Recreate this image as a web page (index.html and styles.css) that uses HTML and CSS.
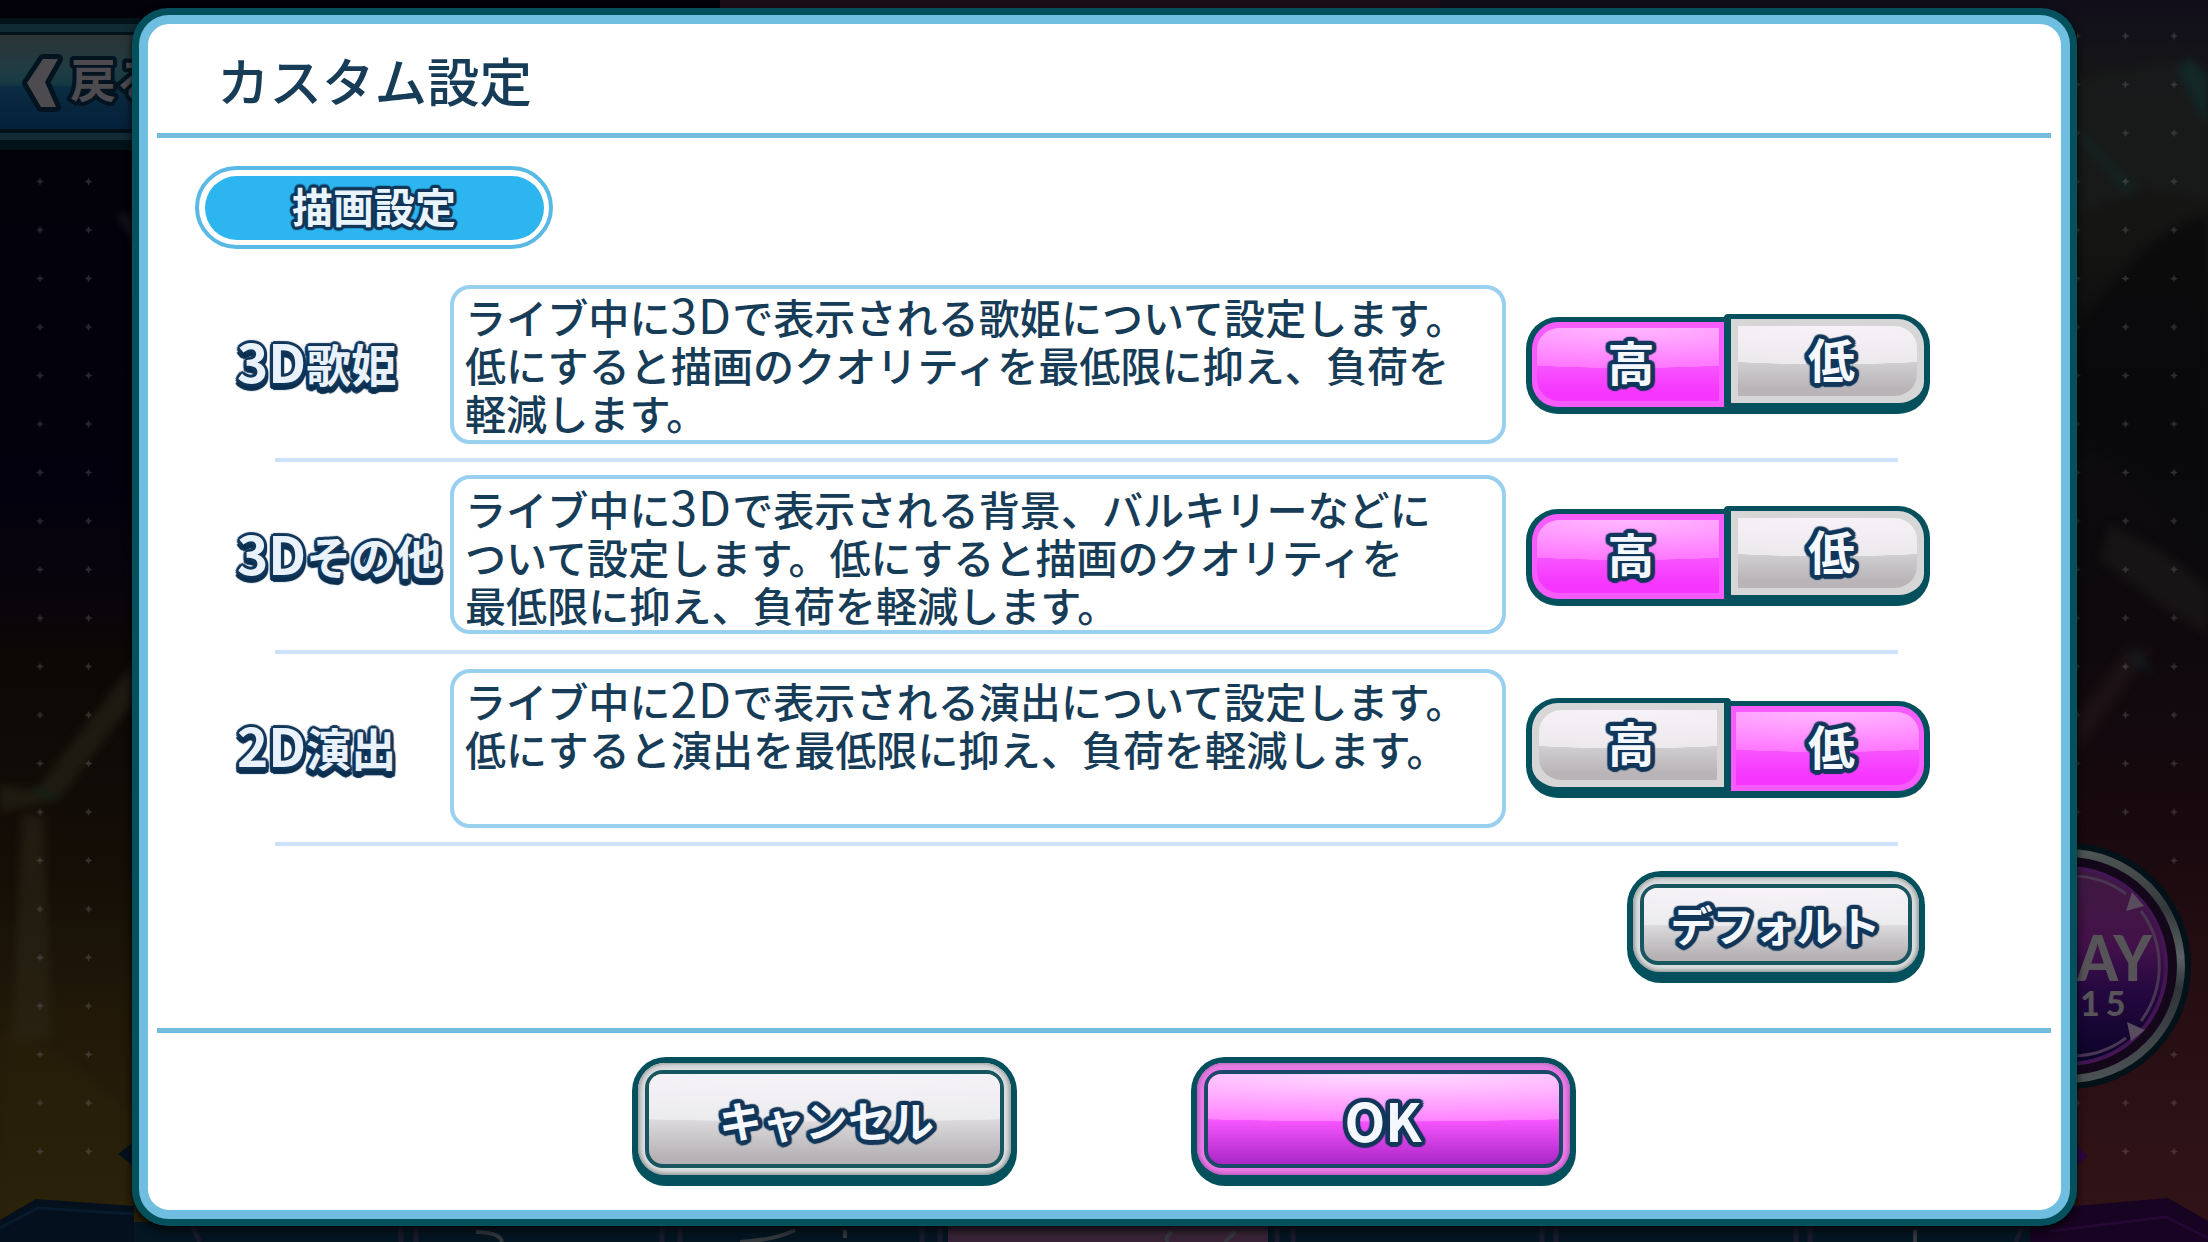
FILE: index.html
```html
<!DOCTYPE html>
<html lang="ja">
<head>
<meta charset="utf-8">
<title>カスタム設定</title>
<link rel="stylesheet" href="styles.css">
</head>
<body>
<svg class="scene" viewBox="0 0 2208 1242" aria-hidden="true">
  <defs>
    <linearGradient id="skyLeft" x1="0" y1="0" x2="0" y2="1">
      <stop offset="0" stop-color="#03020a"/><stop offset=".4" stop-color="#03010d"/>
      <stop offset=".48" stop-color="#09050c"/><stop offset=".53" stop-color="#0b0805"/>
      <stop offset=".7" stop-color="#140e06"/><stop offset=".82" stop-color="#211808"/>
      <stop offset="1" stop-color="#2b220a"/>
    </linearGradient>
    <linearGradient id="skyRight" x1="0" y1="0" x2="0" y2="1">
      <stop offset="0" stop-color="#100d1a"/><stop offset=".06" stop-color="#161617"/>
      <stop offset=".18" stop-color="#151513"/><stop offset=".3" stop-color="#0c0c0e"/>
      <stop offset=".5" stop-color="#0d090d"/><stop offset=".66" stop-color="#18090e"/>
      <stop offset=".8" stop-color="#260e12"/><stop offset="1" stop-color="#321418"/>
    </linearGradient>
    <linearGradient id="backBar" x1="0" y1="0" x2="0" y2="1">
      <stop offset="0" stop-color="#2c3436"/><stop offset=".35" stop-color="#213c43"/>
      <stop offset=".52" stop-color="#153a44"/><stop offset=".56" stop-color="#0a2c41"/>
      <stop offset="1" stop-color="#04203a"/>
    </linearGradient>
    <linearGradient id="disc" x1="0" y1="0" x2="0" y2="1">
      <stop offset="0" stop-color="#3e1a3e"/><stop offset=".4" stop-color="#43114a"/>
      <stop offset=".62" stop-color="#260840"/><stop offset="1" stop-color="#080428"/>
    </linearGradient>
    <linearGradient id="rim" x1="0" y1="0" x2="0" y2="1">
      <stop offset="0" stop-color="#4e5354"/><stop offset=".25" stop-color="#343a3b"/>
      <stop offset=".46" stop-color="#5a6264"/><stop offset=".6" stop-color="#2e3438"/>
      <stop offset="1" stop-color="#4c5254"/>
    </linearGradient>
    <pattern id="stars" x="15.75" y="11.75" width="48.5" height="48.5" patternUnits="userSpaceOnUse">
      <path d="M24.25 20.5l1.2 2.6 2.6 1.2-2.6 1.2-1.2 2.6-1.2-2.6-2.6-1.2 2.6-1.2z" fill="#8b8794" fill-opacity=".28"/>
    </pattern>
    <filter id="soft" color-interpolation-filters="sRGB"><feGaussianBlur stdDeviation="4"/></filter>
  </defs>
  <rect width="1104" height="1242" fill="url(#skyLeft)"/>
  <rect x="1104" width="1104" height="1242" fill="url(#skyRight)"/>
  <rect x="720" width="720" height="12" fill="#1c0e19"/>
  <g filter="url(#soft)" opacity=".75">
    <path d="M0 785L36 790 134 662V702L58 800 0 812z" fill="#292519" fill-opacity=".8"/>
    <path d="M22 815H44L52 1040H12z" fill="#2e2819" fill-opacity=".7"/>
    <path d="M30 785l34 12-20 3z" fill="#16281c"/>
    <path d="M118 215l8-2 10 20v10z" fill="#29222e"/>
    <path d="M0 1030Q60 1040 134 1120V1242H0z" fill="#2b230a" fill-opacity=".5"/>
    <path d="M2077 80L2180 60 2208 88V200L2140 188 2077 215z" fill="#191b1b"/>
    <path d="M2178 70l12-12 18 20v50z" fill="#12302e"/>
    <path d="M2077 126l62 62-12 9-50-58z" fill="#142624"/>
    <path d="M2077 330Q2150 225 2208 215V560Q2150 470 2077 445z" fill="#09090b"/>
    <path d="M2110 525Q2170 550 2208 590V635L2160 605 2100 560z" fill="#1b1818"/>
    <path d="M2077 715l50-65 25-2-24 36-51 70z" fill="#201518"/>
    <path d="M2128 646l27 27-19-8z" fill="#12282a"/>
  </g>
  <rect y="160" width="134" height="1020" fill="url(#stars)"/>
  <rect x="2077" y="16" width="131" height="1170" fill="url(#stars)"/>

  <rect y="18" width="140" height="132" fill="#02131a"/>
  <rect y="24" width="140" height="8" fill="#112b35"/>
  <rect y="35" width="140" height="94" fill="url(#backBar)"/>
  <rect y="129" width="140" height="4" fill="#021018"/>
  <rect y="133" width="140" height="7" fill="#112b37"/>
  <path d="M43 59H58L45 82 56 107H41L27 83z" fill="#4d4b4f" stroke="#03131f" stroke-width="10" stroke-linejoin="round" paint-order="stroke"/>
  <text class="back-text" x="70" y="97">戻る</text>

  <circle cx="2068" cy="966" r="123" fill="#031118"/>
  <circle cx="2068" cy="966" r="113" fill="#15071a" stroke="url(#rim)" stroke-width="8"/>
  <circle cx="2068" cy="966" r="98" fill="url(#disc)" stroke="#421653" stroke-width="4"/>
  <path d="M2074 876a90 90 0 0 1 52 18M2141 911a92 92 0 0 1 0 110M2126 1038a90 90 0 0 1-52 18" fill="none" stroke="#4b3554" stroke-width="3"/>
  <path d="M2132 892l12 14-18 5zM2127 1022l18 8-14 11z" fill="#594c5e"/>
  <text class="play-text" x="2077" y="981" textLength="75" lengthAdjust="spacingAndGlyphs">AY</text>
  <text class="play-count" x="2080" y="1016">15</text>

  <path d="M118 1154l18-14v28zM0 1220L36 1199 134 1206V1242H0z" fill="#04101d"/>
  <path d="M0 1228L38 1208 134 1214" fill="none" stroke="#081a2d" stroke-width="3"/>
  <path d="M2074 1144l14 12-14 11z" fill="#2c0640"/>
  <path d="M2030 1210L2168 1198 2208 1221V1242H2030z" fill="#170322"/>
  <path d="M2050 1231L2166 1217 2208 1238" fill="none" stroke="#240833" stroke-width="3"/>
  <rect x="134" y="1222" width="1896" height="20" fill="#041622"/>
  <rect x="948" y="1222" width="320" height="20" fill="#382336"/>
  <path d="M190 1222l10 20M401 1222v20M416 1222v20M662 1222v20M680 1222v20M922 1222v20M940 1222v20M1277 1222v20M1293 1222v20M1542 1222v20M1556 1222v20M1796 1222v20M1810 1222v20M2024 1222l-8 20" stroke="#191a2b" stroke-width="5"/>
  <path d="M476 1232q24 0 26 10M740 1242q35-2 55-12M845 1230v8M1172 1232q-8 5-4 10M1235 1232l-10 10M1915 1230v12" fill="none" stroke="#33383d" stroke-width="4"/>
</svg>

<main class="dialog">
  <div class="panel">
    <header class="header"><h1 class="title">カスタム設定</h1></header>
    <div class="rule"></div>

    <section class="body">
      <h2 class="pill"><span class="pill-fill"><span class="outlined">描画設定</span></span></h2>

      <div class="row">
        <div class="label"><span class="latin">3D</span>歌姫</div>
        <p class="desc">ライブ中に<span class="latin">3D</span>で表示される歌姫について設定します。<br>低にすると描画のクオリティを最低限に抑え、負荷を<br>軽減します。</p>
        <div class="toggle">
          <button class="seg seg-left on"><span class="outlined">高</span></button>
          <button class="seg seg-right"><span class="outlined">低</span></button>
        </div>
      </div>
      <div class="row-rule"></div>

      <div class="row">
        <div class="label"><span class="latin">3D</span>その他</div>
        <p class="desc desc-raised">ライブ中に<span class="latin">3D</span>で表示される背景、バルキリーなどに<br>ついて設定します。低にすると描画のクオリティを<br>最低限に抑え、負荷を軽減します。</p>
        <div class="toggle">
          <button class="seg seg-left on"><span class="outlined">高</span></button>
          <button class="seg seg-right"><span class="outlined">低</span></button>
        </div>
      </div>
      <div class="row-rule"></div>

      <div class="row">
        <div class="label"><span class="latin">2D</span>演出</div>
        <p class="desc">ライブ中に<span class="latin">2D</span>で表示される演出について設定します。<br>低にすると演出を最低限に抑え、負荷を軽減します。</p>
        <div class="toggle">
          <button class="seg seg-left"><span class="outlined">高</span></button>
          <button class="seg seg-right on"><span class="outlined">低</span></button>
        </div>
      </div>
      <div class="row-rule"></div>

      <button class="btn btn-default"><span class="frame"><span class="face"><span class="outlined">デフォルト</span></span></span></button>
    </section>

    <div class="rule"></div>
    <footer class="footer">
      <button class="btn btn-large"><span class="frame"><span class="face"><span class="outlined">キャンセル</span></span></span></button>
      <button class="btn btn-large btn-ok"><span class="frame"><span class="face"><span class="outlined">OK</span></span></span></button>
    </footer>
  </div>
</main>
</body>
</html>
```
FILE: styles.css
```css
* { box-sizing: border-box; }

body {
  margin: 0;
  width: 2208px;
  height: 1242px;
  overflow: hidden;
  padding: 7.5px 131px 0 132px;
  background: #05030c;
  color: #173c57;
  font-family: "Noto Sans CJK JP", "Noto Sans", sans-serif;
}

button { border: 0; padding: 0; margin: 0; font: inherit; background: none; color: inherit; }

/* Dimmed game scene behind the dialog */
.scene { position: absolute; left: 0; top: 0; width: 2208px; height: 1242px; }
.back-text {
  font-size: 46px; font-weight: 700; fill: #4d4b4f;
  stroke: #03131f; stroke-width: 8px; stroke-linejoin: round; paint-order: stroke;
}
.play-text { font: 900 62px Lato, sans-serif; fill: #565359; }
.play-count { font: 900 34px Lato, sans-serif; letter-spacing: 6px; fill: #565359; }

/* Dialog shell */
.dialog {
  position: relative;
  width: 1945px;
  height: 1218px;
  padding: 7px;
  border-radius: 36px;
  background: #04505c;
  box-shadow: 0 4px 8px rgba(0, 0, 0, .8);
}
.panel {
  display: flex;
  flex-direction: column;
  height: 100%;
  border: 9.5px solid #6fbddf;
  border-radius: 30px;
  background: #fff;
}
.header { height: 109px; padding: 0 0 0 69px; display: flex; align-items: center; }
.title { margin: 2px 0 0; font-size: 52.5px; line-height: 76px; font-weight: 500; white-space: nowrap; }
.rule { height: 5.5px; flex: none; margin: 0 10px 0 9px; background: #73bcdb; }
.body { height: 889.5px; padding-top: 28px; display: flex; flex-direction: column; }

/* Light lettering with a rounded navy outline; --o is the outline radius */
.outlined {
  --o: 4.5px;
  --d: calc(var(--o) * .707);
  --a: calc(var(--o) * .924);
  --b: calc(var(--o) * .383);
  position: relative;
  color: #f5f9ff;
  font-weight: 700;
  white-space: nowrap;
  text-shadow:
    var(--o) 0 1px #12375a, calc(var(--o) * -1) 0 1px #12375a,
    0 var(--o) 1px #12375a, 0 calc(var(--o) * -1) 1px #12375a,
    var(--d) var(--d) 1px #12375a, calc(var(--d) * -1) var(--d) 1px #12375a,
    var(--d) calc(var(--d) * -1) 1px #12375a, calc(var(--d) * -1) calc(var(--d) * -1) 1px #12375a,
    var(--a) var(--b) 1px #12375a, calc(var(--a) * -1) var(--b) 1px #12375a,
    var(--a) calc(var(--b) * -1) 1px #12375a, calc(var(--a) * -1) calc(var(--b) * -1) 1px #12375a,
    var(--b) var(--a) 1px #12375a, calc(var(--b) * -1) var(--a) 1px #12375a,
    var(--b) calc(var(--a) * -1) 1px #12375a, calc(var(--b) * -1) calc(var(--a) * -1) 1px #12375a,
    2px 2px 0 #12375a, -2px 2px 0 #12375a, 2px -2px 0 #12375a, -2px -2px 0 #12375a;
}

.pill {
  margin: 0 0 0 47px;
  width: 358px;
  height: 83px;
  flex: none;
  padding: 5.5px;
  border: 4px solid #58b9e5;
  border-radius: 42px;
}
.pill-fill {
  display: flex;
  align-items: center;
  justify-content: center;
  height: 100%;
  border-radius: 32px;
  background: #2cb5ee;
  font-size: 41px;
}
.pill .outlined { --o: 3px; top: -3px; color: #e9f4fd; }

/* Setting rows */
.row {
  display: grid;
  grid-template-columns: 213px 1056px 404px;
  align-items: center;
  height: 188px;
  flex: none;
  padding-left: 89px;
}
.pill + .row { margin-top: 21px; }
.row-rule { height: 4px; flex: none; margin: 0 163px 0 127px; background: #cbe2f8; }
.label {
  font-size: 45px;
  line-height: 60px;
  font-weight: 700;
  white-space: nowrap;
  color: #e9f1fa;
  text-shadow:
    3px 0 1px #12375a, -3px 0 1px #12375a, 0 -3px 1px #12375a,
    2px -2px 1px #12375a, -2px -2px 1px #12375a,
    3px 2px 1px #12375a, -3px 2px 1px #12375a,
    3px 5px 1px #0c3050, -3px 5px 1px #0c3050,
    0 3px 0 #0c3050, 2px 6px 1px #0c3050, -2px 6px 1px #0c3050, 0 7px 1px #0c3050;
}
.label .latin { font-size: 53px; line-height: 0; }
.desc {
  margin: 0;
  height: 159px;
  padding: 3px 0 0 11px;
  border: 4px solid #9ad0ef;
  border-radius: 20px;
  font-size: 41.1px;
  line-height: 48.4px;
  font-weight: 500;
  white-space: nowrap;
}
.desc .latin { font-size: 48px; line-height: 0; font-weight: 400; letter-spacing: 1px; }
.desc-raised { margin-top: -4px; padding-top: 5px; }

.toggle { display: flex; align-items: flex-start; width: 404px; height: 100px; margin-left: 20px; }
.seg {
  position: relative;
  z-index: 1;
  display: flex;
  align-items: center;
  justify-content: center;
  height: 100px;
  border: 6px solid #04505c;
  border-width: 5.5px 6px 11px;
  background: #d6d6d6;
  font-size: 47px;
}
.seg .outlined { top: -4px; left: 3px; }
.seg::before {
  content: "";
  position: absolute;
  inset: 7px;
  background: radial-gradient(150% 55% at 50% 0, #f7f2f7 0, #ece9ed 99%, transparent 100%), linear-gradient(#d2d0d3 50%, #b8b4b8 90%);
}
.seg-left { width: 205px; border-right-width: 7px; border-radius: 32px 4px 4px 32px; }
.seg-right { width: 206px; margin-left: -7px; border-left-width: 7px; border-radius: 4px 32px 32px 4px; }
.seg-right .outlined { left: 4px; }
.seg-left::before { border-radius: 22px 0 0 22px; }
.seg-right::before { border-radius: 0 22px 22px 0; }
.seg.on {
  z-index: 0;
  height: 97px;
  margin-top: 3px;
  border-top-width: 5.5px;
  border-bottom-width: 7px;
  background: #f65cfb;
}
.seg.on::before {
  inset: 6px 5px;
  background: radial-gradient(150% 55% at 50% 0, #ffb8ff 0, #ff77ff 99%, transparent 100%), linear-gradient(#f855ff 50%, #f636ff 88%);
}

/* Framed push buttons */
.btn { display: flex; flex: none; background: #04505c; border-radius: 34px; }
.frame {
  display: flex;
  flex: 1;
  padding: 7px;
  border-radius: 27px;
  background: #dcdfe0;
  box-shadow: inset 0 0 5px 1px #777b7d, inset 0 3px 2px #f4f6f6;
}
.face {
  position: relative;
  display: flex;
  flex: 1;
  align-items: center;
  justify-content: center;
  border: 4.5px solid #17555f;
  border-radius: 18px;
  background: linear-gradient(#dddbdd 50%, #b5b1b4 94%);
}
.face::before {
  content: "";
  position: absolute;
  inset: 0;
  border-radius: 13px;
  background: radial-gradient(170% 53% at 50% 0, #f8f4f9 0, #ebebed 99%, transparent 100%);
}
.btn-default {
  align-self: flex-end;
  width: 298px;
  height: 112px;
  margin: 25px 136.5px 0 0;
  padding: 6px 6px 11px;
  font-size: 42px;
}
.btn-default .outlined { top: -1px; }
.btn-large { width: 385px; height: 129px; padding: 6px 6px 11px; font-size: 43px; }
.btn-large .outlined { left: 2px; }
.footer { display: flex; gap: 173.5px; padding: 24px 0 0 484px; }
.btn-ok .frame { background: #ee7bea; box-shadow: inset 0 0 5px 1px #a44eaa, inset 0 3px 2px #f59cf3; }
.btn-ok .face { background: linear-gradient(#f956ff 50%, #ad29c9 98%); border-color: #1b4968; }
.btn-ok .face::before { background: radial-gradient(170% 53% at 50% 0, #ffdcff 0, #ff82ff 99%, transparent 100%); }
.btn-ok .outlined { left: 0; font-size: 53px; }
```
